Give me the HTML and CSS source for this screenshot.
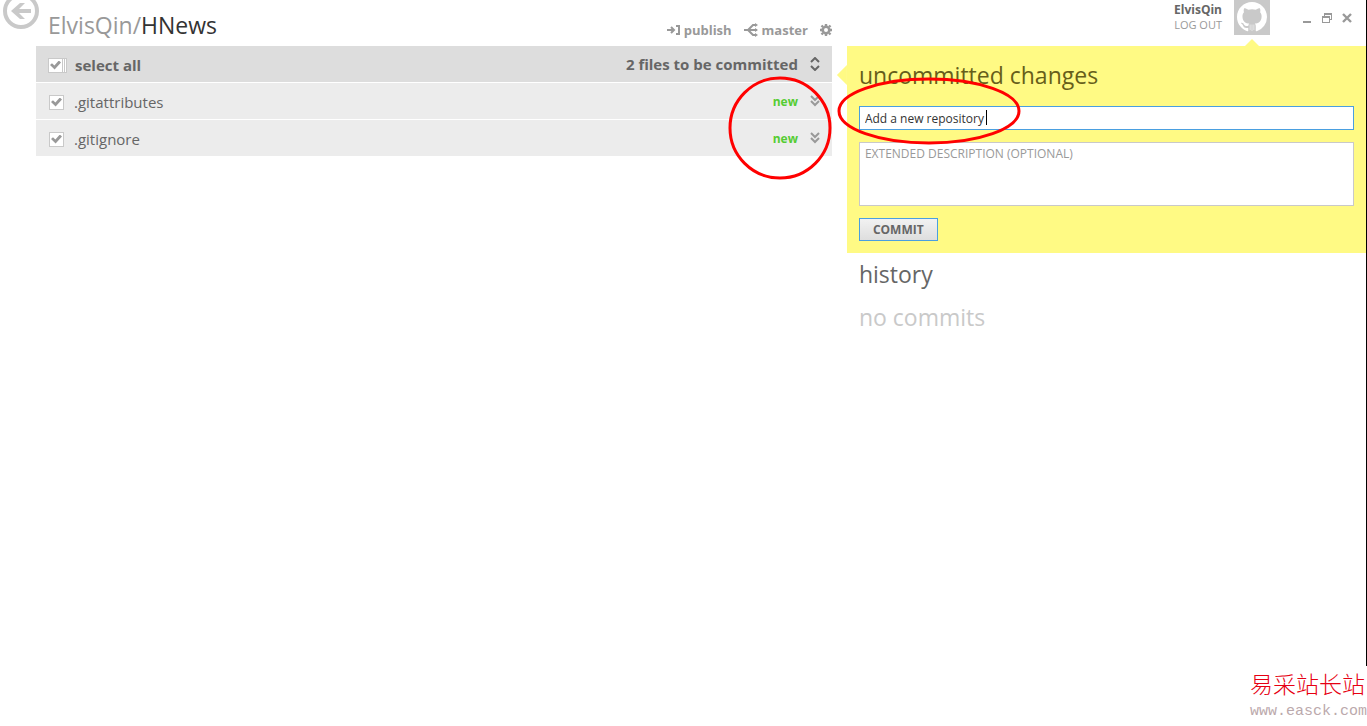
FILE: index.html
```html
<!DOCTYPE html>
<html lang="en">
<head>
    <meta charset="UTF-8">
    <meta name="viewport" content="width=device-width, initial-scale=1.0">
    <title>ElvisQin/HNews</title>
    <link rel="stylesheet" href="styles.css">
</head>
<body>
    <div class="app">
        <main class="repo">
            <header class="repo-head">
                <button class="back" type="button" aria-label="Back">
                    <svg width="36" height="29" viewBox="0 7 36 29">
                        <circle cx="18" cy="18" r="16" fill="none" stroke="#c9c9c9" stroke-width="4"/>
                        <path d="M8 18l9-8h5l-6 6h12v4H16l6 6h-5z" fill="#c9c9c9"/>
                    </svg>
                </button>
                <h1 class="repo-name"><span>ElvisQin/</span>HNews</h1>
                <nav class="tools">
                    <button type="button">
                        <svg width="13" height="12" viewBox="0 0 13 12" fill="none" stroke="#999" stroke-width="2">
                            <path d="M0 6h7M4 3l3 3-3 3M9 2h3v8H9"/>
                        </svg>
                        publish
                    </button>
                    <button type="button">
                        <svg width="14" height="14" viewBox="0 0 14 14" fill="none" stroke="#999" stroke-width="2">
                            <path d="M0 7h13M4 7l5-5h3M4 7l5 5h3"/>
                            <path d="M11 0l3 2-3 2zM11 5l3 2-3 2zM11 10l3 2-3 2z" fill="#999" stroke="none"/>
                        </svg>
                        master
                    </button>
                    <button type="button" aria-label="Settings">
                        <svg width="12" height="12" viewBox="0 0 12 12" fill="none" stroke="#999">
                            <circle cx="6" cy="6" r="3.300" stroke-width="2.600"/>
                            <path d="M6 0v2M6 10v2M0 6h2M10 6h2M1.500 1.500l1.500 1.500M9 9l1.500 1.500M10.500 1.500L9 3M3 9l-1.500 1.500" stroke-width="2.400"/>
                        </svg>
                    </button>
                </nav>
            </header>

            <div class="files">
                <div class="row row-all">
                    <input class="check check-all" type="checkbox" id="all" checked>
                    <label for="all">select all</label>
                    <span class="count">2 files to be committed</span>
                    <button class="toggle" type="button" aria-label="Expand all">
                        <svg width="11" height="14" viewBox="0 0 11 14" fill="none" stroke="#666" stroke-width="2">
                            <path d="M2 5l4-4 4 4M2 9l4 4 4-4"/>
                        </svg>
                    </button>
                </div>
                <div class="row">
                    <input class="check" type="checkbox" id="f1" checked>
                    <label for="f1">.gitattributes</label>
                    <span class="state">new</span>
                    <button class="toggle" type="button" aria-label="Expand .gitattributes">
                        <svg width="11" height="12" viewBox="0 0 11 12" fill="none" stroke="#999" stroke-width="2">
                            <path d="M2 1l4 4 4-4M2 6l4 4 4-4"/>
                        </svg>
                    </button>
                </div>
                <div class="row">
                    <input class="check" type="checkbox" id="f2" checked>
                    <label for="f2">.gitignore</label>
                    <span class="state">new</span>
                    <button class="toggle" type="button" aria-label="Expand .gitignore">
                        <svg width="11" height="12" viewBox="0 0 11 12" fill="none" stroke="#999" stroke-width="2">
                            <path d="M2 1l4 4 4-4M2 6l4 4 4-4"/>
                        </svg>
                    </button>
                </div>
                <svg class="mark mark-new" width="104" height="104" viewBox="0 0 104 104">
                    <circle cx="52" cy="52" r="50"/>
                </svg>
            </div>
        </main>

        <aside class="side">
            <header class="side-head">
                <div class="user">
                    <strong>ElvisQin</strong>
                    <a href="#">LOG OUT</a>
                </div>
                <div class="avatar">
                    <svg width="30" height="30" viewBox="0 0 16 16">
                        <path fill="#fff" d="M8 0C3.58 0 0 3.58 0 8c0 3.54 2.29 6.53 5.47 7.59.4.07.55-.17.55-.38 0-.19-.01-.82-.01-1.49-2.01.37-2.53-.49-2.69-.94-.09-.23-.48-.94-.82-1.13-.28-.15-.68-.52-.01-.53.63-.01 1.08.58 1.23.82.72 1.21 1.87.87 2.33.66.07-.52.28-.87.51-1.07-1.78-.2-3.64-.89-3.64-3.95 0-.87.31-1.59.82-2.15-.08-.2-.36-1.02.08-2.12 0 0 .67-.21 2.2.82.64-.18 1.32-.27 2-.27s1.36.09 2 .27c1.53-1.04 2.2-.82 2.2-.82.44 1.1.16 1.92.08 2.12.51.56.82 1.27.82 2.15 0 3.07-1.87 3.75-3.65 3.95.29.25.54.73.54 1.48 0 1.07-.01 1.93-.01 2.2 0 .21.15.46.55.38A8.01 8.01 0 0 0 16 8c0-4.42-3.58-8-8-8z"/>
                        <path d="M7 12v3M8 12v3.500M9 12v3" stroke="#fff" stroke-width=".3"/>
                    </svg>
                </div>
                <div class="window-buttons">
                    <button type="button" aria-label="Minimize">
                        <svg width="10" height="12" viewBox="0 0 10 12"><path d="M1 9h8v2H1z" fill="#999"/></svg>
                    </button>
                    <button type="button" aria-label="Restore">
                        <svg width="10" height="12" viewBox="0 0 10 12">
                            <path d="M2 1h8v7H8V7h1V3H3v1H2zM0 4h8v7H0zM1 6v4h6V6z" fill="#999" fill-rule="evenodd"/>
                        </svg>
                    </button>
                    <button type="button" aria-label="Close">
                        <svg width="10" height="12" viewBox="0 0 10 12" stroke="#999" stroke-width="2.400">
                            <path d="M1 2l8 8M9 2l-8 8"/>
                        </svg>
                    </button>
                </div>
            </header>

            <form class="commit">
                <h2>uncommitted changes</h2>
                <div class="summary">
                    <input type="text" aria-label="Summary" value="Add a new repository">
                    <span class="caret"></span>
                </div>
                <textarea aria-label="Extended description" placeholder="EXTENDED DESCRIPTION (OPTIONAL)"></textarea>
                <button class="commit-btn" type="button">COMMIT</button>
                <svg class="mark mark-summary" width="184" height="68" viewBox="0 0 184 68">
                    <ellipse cx="92" cy="34" rx="90" ry="32"/>
                </svg>
            </form>

            <section class="history">
                <h2>history</h2>
                <p>no commits</p>
            </section>
        </aside>
    </div>

    <footer class="site">
        <span class="site-name" lang="zh">易采站长站</span>
        <span class="site-url">www.easck.com</span>
    </footer>
</body>
</html>
```
FILE: styles.css
```css
*{
    margin: 0;
    padding: 0;
    box-sizing: border-box;
}
body{
    display: flex;
    flex-direction: column;
    min-height: 100vh;
    background: #fff;
    color: #666;
    font-family: "Open Sans", "Noto Sans", sans-serif;
    font-size: 15px;
}
button{
    border: 0;
    background: none;
    color: inherit;
    font: inherit;
    cursor: pointer;
}
svg{
    display: block;
}
.app{
    flex: 1;
    display: grid;
    grid-template-columns: minmax(0, 1fr) 38%;
    gap: 15px;
    border-right: 1px solid #000;
}

/* left column */
.repo-head{
    display: flex;
    height: 46px;
    padding-left: 3px;
}
.back{
    align-self: flex-start;
}
.repo-name{
    flex: 1;
    margin-left: 9px;
    font-size: 23px;
    font-weight: 400;
    line-height: 50px;
    color: #333;
}
.repo-name span{
    color: #999;
}
.tools{
    display: flex;
    align-items: center;
    gap: 12px;
    padding-top: 14px;
    color: #999;
    font-size: 13px;
    font-weight: 700;
}
.tools button{
    display: flex;
    align-items: center;
    gap: 4px;
}
.files{
    position: relative;
    display: grid;
    gap: 1px;
    margin-left: 36px;
}
.row{
    display: flex;
    align-items: center;
    height: 36px;
    padding: 0 12px 0 13px;
    background: #ececec;
}
.row-all{
    padding-left: 12px;
    background: #ddd;
    font-weight: 700;
}
.row label{
    flex: 1;
    margin-left: 10px;
    padding-top: 2px;
}
.row-all label{
    margin-left: 8px;
}
.check{
    appearance: none;
    width: 15px;
    height: 15px;
    margin-top: 2px;
    border: 1px solid #c9c9c9;
    background: #fff;
}
.check:checked::before{
    content: "";
    display: block;
    width: 11px;
    height: 9px;
    margin: 2px 1px;
    background: #999;
    clip-path: polygon(0 50%, 18% 30%, 40% 55%, 80% 0, 100% 22%, 42% 100%);
}
.check-all{
    width: 19px;
    background: linear-gradient(90deg, transparent 13px, #c9c9c9 13px 14px, transparent 14px 15px, #c9c9c9 15px 16px, transparent 16px) #fff;
}
.state{
    color: #5c3;
    font-size: 12px;
    font-weight: 700;
}
.toggle{
    margin-left: 11px;
}
.mark{
    position: absolute;
    fill: none;
    stroke: #f00;
    stroke-width: 3px;
    pointer-events: none;
}
.mark-new{
    top: 30px;
    right: 0;
}

/* right column */
.side-head{
    display: flex;
    justify-content: flex-end;
    align-items: flex-start;
    height: 46px;
    padding-right: 14px;
}
.user{
    display: flex;
    flex-direction: column;
    padding-top: 2px;
    text-align: right;
    font-size: 12px;
    line-height: 15px;
}
.user a{
    color: #999;
    font-size: 11px;
    text-decoration: none;
}
.avatar{
    margin-left: 12px;
    padding: 2px 3px 3px;
    background: #c9c9c9;
}
.window-buttons{
    display: flex;
    gap: 10px;
    margin: 12px 0 0 32px;
}
.commit{
    position: relative;
    display: flex;
    flex-direction: column;
    gap: 12px;
    padding: 0 12px 12px;
    background: #fffa84;
}
.commit::before,
.commit::after{
    content: "";
    position: absolute;
    background: #fffa84;
}
/* pointer to the file list */
.commit::before{
    top: 19px;
    left: -10px;
    width: 10px;
    height: 20px;
    clip-path: polygon(100% 0, 100% 100%, 0 50%);
}
/* pointer to the avatar */
.commit::after{
    top: -7px;
    right: 107px;
    width: 14px;
    height: 7px;
    clip-path: polygon(0 100%, 50% 0, 100% 100%);
}
.commit h2,
.history h2{
    font-size: 23px;
    font-weight: 400;
}
.commit h2{
    height: 48px;
    color: #665e1a;
    line-height: 58px;
}
.summary{
    position: relative;
}
.commit input,
.commit textarea{
    display: block;
    width: 100%;
    border: 1px solid #4a9fe0;
    background: #fff;
    color: #333;
    font-family: inherit;
    font-size: 12px;
    line-height: 16px;
}
.commit input{
    height: 24px;
    padding: 0 5px;
}
.commit textarea{
    height: 64px;
    padding: 3px 5px;
    border-color: #c9c9c9;
    resize: none;
}
.commit textarea::placeholder{
    color: #999;
}
.caret{
    position: absolute;
    top: 4px;
    left: 127px;
    width: 1px;
    height: 15px;
    background: #000;
}
.commit .commit-btn{
    align-self: flex-start;
    height: 23px;
    padding: 0 13px;
    border: 1px solid #4a9fe0;
    background: linear-gradient(#f2f2f2, #dedede);
    font-size: 12px;
    font-weight: 700;
}
.mark-summary{
    top: 31px;
    left: -10px;
}
.history{
    padding: 0 12px;
}
.history h2{
    line-height: 42px;
}
.history p{
    color: #c9c9c9;
    font-size: 23px;
    line-height: 44px;
}

/* bottom */
.site{
    display: flex;
    flex-direction: column;
    align-items: flex-end;
    height: 60px;
    padding-top: 5px;
}
.site-name{
    margin-right: 2px;
    color: #e60012;
    font-family: "Noto Sans CJK SC", sans-serif;
    font-size: 23px;
    font-weight: 300;
    line-height: 24px;
}
.site-url{
    margin-top: 6px;
    color: #bba9ac;
    font-family: "Liberation Mono", monospace;
    font-size: 15px;
    line-height: 22px;
}
```
